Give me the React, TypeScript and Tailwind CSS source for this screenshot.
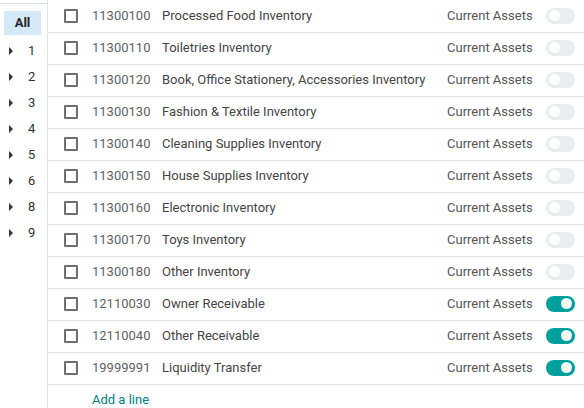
import React from "react";

type Account = {
  code: string;
  name: string;
  type: string;
  reconcile: boolean;
};

const accounts: Account[] = [
  { code: "11300100", name: "Processed Food Inventory", type: "Current Assets", reconcile: false },
  { code: "11300110", name: "Toiletries Inventory", type: "Current Assets", reconcile: false },
  { code: "11300120", name: "Book, Office Stationery, Accessories Inventory", type: "Current Assets", reconcile: false },
  { code: "11300130", name: "Fashion & Textile Inventory", type: "Current Assets", reconcile: false },
  { code: "11300140", name: "Cleaning Supplies Inventory", type: "Current Assets", reconcile: false },
  { code: "11300150", name: "House Supplies Inventory", type: "Current Assets", reconcile: false },
  { code: "11300160", name: "Electronic Inventory", type: "Current Assets", reconcile: false },
  { code: "11300170", name: "Toys Inventory", type: "Current Assets", reconcile: false },
  { code: "11300180", name: "Other Inventory", type: "Current Assets", reconcile: false },
  { code: "12110030", name: "Owner Receivable", type: "Current Assets", reconcile: true },
  { code: "12110040", name: "Other Receivable", type: "Current Assets", reconcile: true },
  { code: "19999991", name: "Liquidity Transfer", type: "Current Assets", reconcile: true },
];

const groups = ["1", "2", "3", "4", "5", "6", "8", "9"];

const Toggle = ({ on }: { on: boolean }) => (
  <div
    className={`w-[29px] h-4 rounded-full flex items-center px-[3px] ${
      on ? "bg-[#00a09d] justify-end" : "bg-[#eaecef] justify-start"
    }`}
  >
    <div className="w-[11px] h-[11px] rounded-full bg-white" />
  </div>
);

export default function App() {
  return (
    <div
      className="w-[584px] h-[408px] overflow-hidden bg-white flex text-[13px] text-[#4a4a4a]"
      style={{ fontFamily: "Roboto, 'Liberation Sans', sans-serif" }}
    >
      {/* sidebar filter */}
      <div className="w-[48px] shrink-0 border-r border-[#dee2e6]">
        <div className="mt-[3px] border-t border-[#dee2e6] pt-[7px] pl-1">
          <div className="w-[37px] h-6 bg-[#d4eaf8] flex items-center justify-center font-bold text-[#212529]">
            All
          </div>
          <div className="mt-[3px] flex flex-col">
            {groups.map((g) => (
              <div key={g} className="h-[26px] flex items-center text-[#333]">
                <span className="ml-[5px] w-0 h-0 border-y-[4px] border-y-transparent border-l-[4px] border-l-[#333]" />
                <span className="ml-[15px]">{g}</span>
              </div>
            ))}
          </div>
        </div>
      </div>

      {/* account list */}
      <div className="flex-1 pt-px">
        {accounts.map((a) => (
          <div key={a.code} className="h-8 pb-[2px] border-b border-[#dee2e6] flex items-center">
            <div className="w-[44px] pl-[16px] shrink-0 flex items-center">
              <div className="w-[14px] h-[14px] border-2 border-[#6f6f6f] rounded-[1px] bg-white" />
            </div>
            <div className="w-[70px] shrink-0 text-[#5f5f5f]">{a.code}</div>
            <div className="flex-1 truncate text-[#444]">{a.name}</div>
            <div className="w-[99px] shrink-0 text-[#555]">{a.type}</div>
            <div className="w-[38px] shrink-0">
              <Toggle on={a.reconcile} />
            </div>
          </div>
        ))}
        <div className="h-[30px] flex items-center pl-[44px] text-[#017e84]">Add a line</div>
      </div>
    </div>
  );
}
